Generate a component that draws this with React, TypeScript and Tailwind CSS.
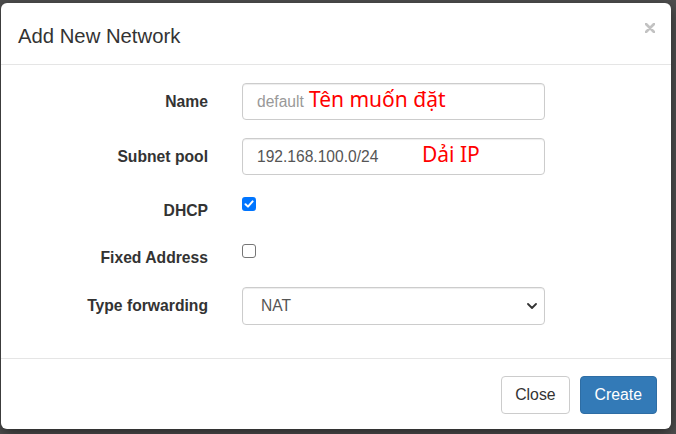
import React from 'react';

const sans = { fontFamily: '"Liberation Sans", Arial, Helvetica, sans-serif' };
const note = { fontFamily: '"Noto Sans", "Open Sans", sans-serif' };

function Label({ children, top }: { children: React.ReactNode; top?: boolean }) {
  return (
    <div
      className={`w-[207px] shrink-0 text-right font-bold text-[15.7px] leading-[22px] text-[#333] ${top ? 'pt-[7px]' : ''}`}
    >
      {children}
    </div>
  );
}

function Checkbox({ checked }: { checked?: boolean }) {
  if (checked) {
    return (
      <div className="mt-[4px] w-[14px] h-[14px] rounded-[3px] bg-[#0075ff] flex items-center justify-center">
        <svg width="10" height="10" viewBox="0 0 10 10">
          <path d="M1.5 5.2 L4 7.6 L8.6 2.4" fill="none" stroke="#fff" strokeWidth="2" strokeLinecap="round" strokeLinejoin="round" />
        </svg>
      </div>
    );
  }
  return <div className="mt-[4px] w-[14px] h-[14px] rounded-[3px] border border-[#767676] bg-white" />;
}

export default function App() {
  return (
    <div className="w-[676px] h-[434px] bg-[#4f4f4f] pt-[3px] pl-[1px] overflow-hidden" style={sans}>
      <div className="w-[670px] h-[426px] bg-white rounded-[6px] flex flex-col shadow-[0_4px_14px_rgba(0,0,0,0.5)]">
        {/* Header */}
        <div className="h-[62px] shrink-0 border-b border-[#e5e5e5] flex items-start justify-between pl-[17px] pr-[16px]">
          <h4 className="pt-[19px] text-[20.3px] leading-[28px] text-[#333]">Add New Network</h4>
          <svg className="mt-[20px]" width="10" height="10" viewBox="0 0 10 10">
            <path d="M1 1 L9 9 M9 1 L1 9" stroke="#c2c2c2" strokeWidth="2.6" strokeLinecap="round" />
          </svg>
        </div>

        {/* Body */}
        <div className="h-[293px] shrink-0 pt-[18px] flex flex-col">
          <div className="flex items-center gap-[34px] h-[37px]">
            <Label>Name</Label>
            <div className="relative w-[303px] h-[37px]">
              <input
                readOnly
                placeholder="default"
                className="w-full h-full border border-[#ccc] rounded-[4px] pl-[14px] text-[15.6px] text-[#555] placeholder:text-[#999] shadow-[inset_0_1px_1px_rgba(0,0,0,0.075)] outline-none"
              />
              <span className="absolute left-[67px] top-0 bottom-0 flex items-center pb-[3px] text-[21px] text-[#ff0000]" style={note}>
                Tên muốn đặt
              </span>
            </div>
          </div>

          <div className="flex items-center gap-[34px] h-[37px] mt-[18px]">
            <Label>Subnet pool</Label>
            <div className="relative w-[303px] h-[37px]">
              <input
                readOnly
                value="192.168.100.0/24"
                className="w-full h-full border border-[#ccc] rounded-[4px] pl-[14px] text-[15.6px] text-[#555] shadow-[inset_0_1px_1px_rgba(0,0,0,0.075)] outline-none"
              />
              <span className="absolute left-[180px] top-0 bottom-0 flex items-center pb-[3px] text-[21px] text-[#ff0000]" style={note}>
                Dải IP
              </span>
            </div>
          </div>

          <div className="flex items-start gap-[34px] h-[47px] mt-[18px]">
            <Label top>DHCP</Label>
            <Checkbox checked />
          </div>

          <div className="flex items-start gap-[34px] h-[47px]">
            <Label top>Fixed Address</Label>
            <Checkbox />
          </div>

          <div className="flex items-center gap-[34px] h-[38px]">
            <Label>Type forwarding</Label>
            <div className="w-[303px] h-[38px] border border-[#ccc] rounded-[4px] flex items-center justify-between pl-[18px] pr-[7px] text-[15.6px] text-[#555] shadow-[inset_0_1px_1px_rgba(0,0,0,0.075)]">
              <span>NAT</span>
              <svg width="10" height="6" viewBox="0 0 10 6">
                <path d="M1 1 L5 5 L9 1" fill="none" stroke="#333" strokeWidth="1.8" strokeLinecap="round" strokeLinejoin="round" />
              </svg>
            </div>
          </div>
        </div>

        {/* Footer */}
        <div className="flex-1 border-t border-[#e5e5e5] flex items-start justify-end gap-[10px] pt-[17px] pr-[14px]">
          <button className="h-[38px] px-[13px] border border-[#ccc] rounded-[4px] bg-white text-[15.8px] text-[#333]">
            Close
          </button>
          <button className="h-[38px] px-[14px] border border-[#2e6da4] rounded-[4px] bg-[#337ab7] text-[15.8px] text-white">
            Create
          </button>
        </div>
      </div>
    </div>
  );
}
